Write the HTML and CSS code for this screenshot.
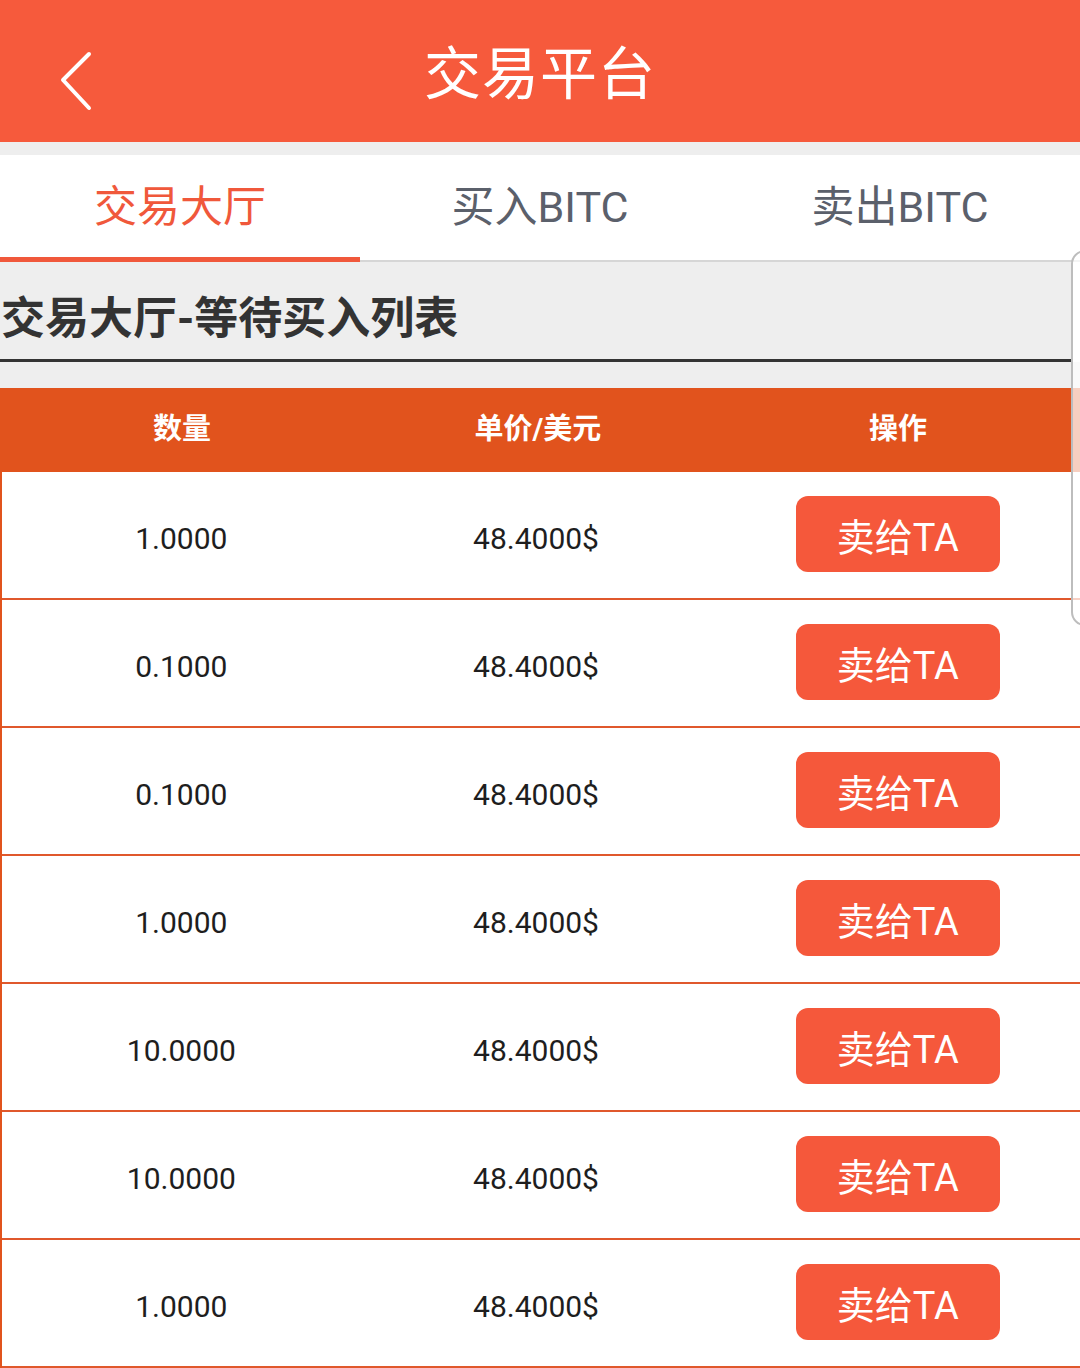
FILE: index.html
```html
<!DOCTYPE html>
<html lang="zh-CN">
<head>
<meta charset="utf-8">
<title>交易平台</title>
<link rel="stylesheet" href="styles.css">
</head>
<body>
<div class="page">
  <header class="topbar">
    <svg class="back" width="40" height="64" viewBox="0 0 40 64">
      <polyline points="30,4 4,30 30,58" fill="none" stroke="#fff" stroke-width="4" stroke-linecap="round" stroke-linejoin="round"/>
    </svg>
    <h1 class="title">交易平台</h1>
  </header>
  <div class="spacer"></div>
  <nav class="tabs">
    <div class="tab active">交易大厅</div>
    <div class="tab">买入BITC</div>
    <div class="tab">卖出BITC</div>
  </nav>
  <div class="section">交易大厅-等待买入列表</div>
  <div class="gap"></div>
  <div class="table">
    <div class="thead">
      <div class="cell">数量</div>
      <div class="cell">单价/美元</div>
      <div class="cell">操作</div>
    </div>
    <div class="row"><div class="cell">1.0000</div><div class="cell">48.4000$</div><div class="cell"><button class="btn">卖给TA</button></div></div>
    <div class="row"><div class="cell">0.1000</div><div class="cell">48.4000$</div><div class="cell"><button class="btn">卖给TA</button></div></div>
    <div class="row"><div class="cell">0.1000</div><div class="cell">48.4000$</div><div class="cell"><button class="btn">卖给TA</button></div></div>
    <div class="row"><div class="cell">1.0000</div><div class="cell">48.4000$</div><div class="cell"><button class="btn">卖给TA</button></div></div>
    <div class="row"><div class="cell">10.0000</div><div class="cell">48.4000$</div><div class="cell"><button class="btn">卖给TA</button></div></div>
    <div class="row"><div class="cell">10.0000</div><div class="cell">48.4000$</div><div class="cell"><button class="btn">卖给TA</button></div></div>
    <div class="row"><div class="cell">1.0000</div><div class="cell">48.4000$</div><div class="cell"><button class="btn">卖给TA</button></div></div>
  </div>
  <div class="edge-panel"></div>
</div>
</body>
</html>
```
FILE: styles.css
```css
* { box-sizing: border-box; }
html, body { margin: 0; padding: 0; }
body {
  font-family: Roboto, "Noto Sans CJK SC", "Noto Sans", sans-serif;
  background: #fff;
  width: 1080px;
  height: 1368px;
  overflow: hidden;
}
.page { position: relative; width: 1080px; }
.topbar {
  height: 142px;
  background: #f65a3c;
  display: flex;
  align-items: center;
  justify-content: center;
  position: relative;
}
.back {
  position: absolute;
  left: 59px;
  top: 50px;
}
.title {
  margin: 0;
  color: #fff;
  font-weight: 400;
  font-size: 57px;
  letter-spacing: 1px;
  line-height: 1;
  padding-top: 6px;
}
.spacer { height: 13px; background: #eeeeee; }
.tabs {
  display: flex;
  height: 107px;
  background: #fff;
  border-bottom: 2px solid #d6d6d6;
}
.tab {
  flex: 1;
  display: flex;
  align-items: center;
  justify-content: center;
  font-size: 43px;
  color: #5b606b;
  padding-bottom: 10px;
}
.tab.active {
  color: #f0583b;
  border-bottom: 5px solid #f0583b;
  margin-bottom: -2px;
  padding-bottom: 6px;
}
.section {
  height: 100px;
  background: #eeeeee;
  border-bottom: 3px solid #333;
  margin-right: 9px;
  font-size: 44px;
  font-weight: 700;
  color: #333;
  display: flex;
  align-items: center;
  padding-left: 1px;
  padding-top: 8px;
}
.gap { height: 26px; background: #eeeeee; }
.table { border-left: 2px solid #e1531d; }
.thead {
  display: flex;
  height: 84px;
  background: #e1531d;
  color: #fff;
  font-weight: 700;
  font-size: 29px;
  margin-left: -2px;
}
.thead .cell { padding-bottom: 8px; }
.cell {
  flex: 1;
  display: flex;
  align-items: center;
  justify-content: center;
}
.thead .cell:nth-child(2) { margin-left: -8px; }
.thead .cell:nth-child(3) { margin-left: -4px; }
.row {
  display: flex;
  height: 128px;
  border-bottom: 2px solid #e0582c;
  font-size: 30px;
  color: #1e1e1e;
}
.row .cell { padding-top: 6px; }
.row .cell:first-child { margin-left: -2px; }
.row .cell:nth-child(2) { margin-left: -8px; }
.btn {
  width: 204px;
  height: 76px;
  border: none;
  border-radius: 12px;
  background: #f5583b;
  color: #fff;
  font-family: Roboto, "Noto Sans CJK SC", sans-serif;
  font-size: 38px;
  padding: 0;
  margin-top: -8px;
  margin-left: -2px;
}
.edge-panel {
  position: absolute;
  left: 1071px;
  top: 250px;
  width: 30px;
  height: 376px;
  border: 2px solid #bdbdbd;
  border-radius: 14px;
  background: rgba(255,255,255,0.72);
}
```
